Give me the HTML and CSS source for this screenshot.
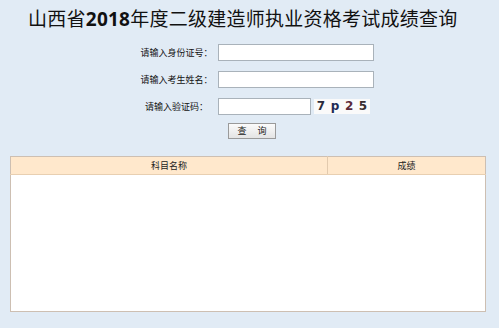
FILE: index.html
```html
<!DOCTYPE html>
<html>
<head>
  <meta charset="utf-8">
  <title>山西省2018年度二级建造师执业资格考试成绩查询</title>
  <link rel="stylesheet" href="styles.css">
</head>
<body>
  <h1 class="page-title">山西省<b class="title-year">2018</b>年度二级建造师执业资格考试成绩查询</h1>

  <div class="query-form">
    <div class="form-row">
      <label class="form-label" for="idcard">请输入身份证号：</label>
      <input class="form-input" type="text" id="idcard">
    </div>
    <div class="form-row">
      <label class="form-label" for="name">请输入考生姓名：</label>
      <input class="form-input" type="text" id="name">
    </div>
    <div class="form-row">
      <label class="form-label" for="code">请输入验证码：</label>
      <input class="form-input form-input-short" type="text" id="code">
      <span class="captcha"><span class="c1">7</span><span class="c2">p</span><span class="c3">2</span><span class="c4">5</span></span>
    </div>
    <div class="form-actions">
      <button class="form-button"><span>查</span><span>询</span></button>
    </div>
  </div>

  <table class="result-table">
    <thead>
      <tr>
        <th class="col-subject">科目名称</th>
        <th class="col-score">成绩</th>
      </tr>
    </thead>
    <tbody>
      <tr>
        <td class="col-subject"></td>
        <td class="col-score"></td>
      </tr>
    </tbody>
  </table>
</body>
</html>
```

FILE: styles.css
```css
body {
  margin: 0;
  background-color: #e1ebf5;
  font-family: "Noto Sans CJK SC", sans-serif;
  color: #222;
}

.page-title {
  margin: 0;
  padding-left: 28px;
  height: 36px;
  line-height: 36px;
  font-size: 19px;
  letter-spacing: 0.25px;
  font-weight: normal;
  color: #111;
}

.title-year {
  font-family: "Noto Sans", sans-serif;
  font-weight: bold;
}

.query-form {
  margin-left: 136px;
  padding-top: 3px;
}

.form-row {
  display: flex;
  align-items: center;
  height: 27px;
}

.form-label {
  width: 81px;
  margin-right: 1px;
  text-align: center;
  font-size: 9px;
  color: #111;
}

.form-input {
  box-sizing: border-box;
  width: 156px;
  height: 17px;
  margin: 0;
  padding: 0 3px;
  border: 1px solid #a9b2ba;
  background: #fff;
  font-size: 10px;
}

.form-input-short {
  width: 93px;
}

.captcha {
  display: flex;
  align-items: center;
  justify-content: space-around;
  width: 56px;
  height: 15px;
  margin-left: 3px;
  background: #fafafa;
  font-family: "DejaVu Sans", sans-serif;
  font-weight: bold;
  font-size: 12px;
  line-height: 15px;
}

.c1 { color: #2a2a3a; }
.c2 { color: #1e2a55; }
.c3 { color: #5a2a3a; }
.c4 { color: #3a3030; }

.form-actions {
  display: flex;
  margin-top: 3px;
  padding-left: 92px;
}

.form-button {
  display: flex;
  justify-content: center;
  gap: 11px;
  width: 48px;
  height: 16px;
  padding: 0;
  border: 1px solid #9a9a9a;
  background: linear-gradient(#fbfbfb, #e4e4e4);
  font-family: "Noto Sans CJK SC", sans-serif;
  font-size: 9px;
  line-height: 14px;
  color: #222;
}

.result-table {
  margin: 17px 0 0 10px;
  width: 476px;
  height: 156px;
  border-collapse: collapse;
  border: 1px solid #cdbfb2;
  background: #fff;
  box-shadow: 0 1px 0 #d8dde3;
}

.result-table th {
  height: 17px;
  padding: 0;
  background-color: #ffe8cc;
  border-bottom: 1px solid #e8cfb1;
  font-size: 9px;
  font-weight: normal;
  color: #222;
}

.result-table th.col-subject {
  border-right: 1px solid #e2caae;
}

.col-subject {
  width: 316px;
}

.result-table td {
  padding: 0;
}
```
